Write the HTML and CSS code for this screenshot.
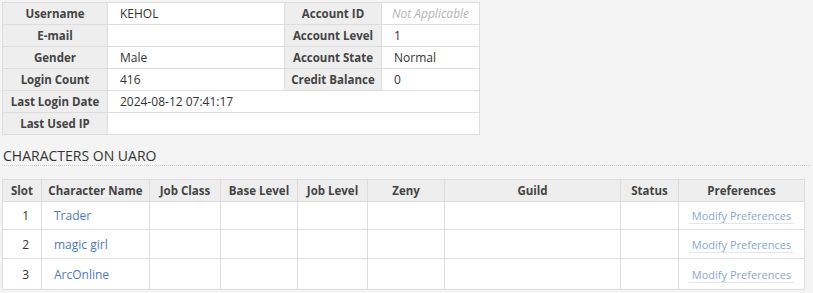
FILE: index.html
```html
<!DOCTYPE html>
<html lang="en">
<head>
    <meta charset="UTF-8">
    <title>Account Details</title>
    <link rel="stylesheet" href="styles.css">
</head>
<body>
    <table class="info">
        <tr>
            <th class="c1">Username</th>
            <td class="c2">KEHOL</td>
            <th class="c3">Account ID</th>
            <td class="c4"><span class="na">Not Applicable</span></td>
        </tr>
        <tr>
            <th>E-mail</th>
            <td></td>
            <th>Account Level</th>
            <td>1</td>
        </tr>
        <tr>
            <th>Gender</th>
            <td>Male</td>
            <th>Account State</th>
            <td>Normal</td>
        </tr>
        <tr>
            <th>Login Count</th>
            <td>416</td>
            <th>Credit Balance</th>
            <td>0</td>
        </tr>
        <tr>
            <th>Last Login Date</th>
            <td colspan="3">2024-08-12 07:41:17</td>
        </tr>
        <tr>
            <th>Last Used IP</th>
            <td colspan="3"></td>
        </tr>
    </table>

    <h3 class="section">Characters on UARO</h3>

    <table class="chars">
        <tr>
            <th class="w-slot">Slot</th>
            <th class="w-name">Character Name</th>
            <th class="w-job">Job Class</th>
            <th class="w-base">Base Level</th>
            <th class="w-jlv">Job Level</th>
            <th class="w-zeny">Zeny</th>
            <th class="w-guild">Guild</th>
            <th class="w-status">Status</th>
            <th>Preferences</th>
        </tr>
        <tr>
            <td class="slot">1</td>
            <td><a href="#" class="name">Trader</a></td>
            <td></td><td></td><td></td><td></td><td></td><td></td>
            <td class="pref"><a href="#">Modify Preferences</a></td>
        </tr>
        <tr class="mid">
            <td class="slot">2</td>
            <td><a href="#" class="name">magic girl</a></td>
            <td></td><td></td><td></td><td></td><td></td><td></td>
            <td class="pref"><a href="#">Modify Preferences</a></td>
        </tr>
        <tr class="last">
            <td class="slot">3</td>
            <td><a href="#" class="name">ArcOnline</a></td>
            <td></td><td></td><td></td><td></td><td></td><td></td>
            <td class="pref"><a href="#">Modify Preferences</a></td>
        </tr>
    </table>
</body>
</html>
```

FILE: styles.css
```css
body {
    font-family: 'Open Sans', 'DejaVu Sans', sans-serif;
    font-size: 12px;
    color: #333333;
    margin: 2px;
    background-color: #f4f4f4;
}

table {
    border-collapse: collapse;
    background-color: #ffffff;
    table-layout: fixed;
}

th, td {
    box-sizing: border-box;
    border: 1px solid #dddddd;
    padding: 0 12px;
    white-space: nowrap;
    overflow: hidden;
}

th {
    background-color: #eeeeee;
    color: #444444;
    font-size: 11.5px;
    font-weight: 700;
    text-align: center;
    padding: 0 2px;
}

td {
    text-align: left;
}

.info {
    width: 478px;
}

.info tr {
    height: 22px;
}

.info .c1 {
    width: 105px;
}

.info .c2 {
    width: 177px;
}

.info .c3 {
    width: 97px;
}

.na {
    color: #b4b4b4;
    font-style: italic;
}

.info .c4 {
    padding-left: 10px;
    padding-right: 0;
}

.section {
    font-size: 14px;
    font-weight: normal;
    text-transform: uppercase;
    color: #333333;
    margin: 11px -2px 13px 0;
    padding: 0 0 0 1px;
    border-bottom: 1px dotted #cccccc;
}

.chars {
    width: 803px;
}

.chars tr {
    height: 28px;
}

.chars tr:first-child {
    height: 22px;
}

.chars tr.mid {
    height: 29px;
}

.chars tr.last {
    height: 31px;
}

.w-slot { width: 39px; }
.w-name { width: 108px; }
.w-job { width: 71px; }
.w-base { width: 77px; }
.w-jlv { width: 70px; }
.w-zeny { width: 77px; }
.w-guild { width: 176px; }
.w-status { width: 58px; }

.slot {
    text-align: right;
    padding-right: 12px;
}

a {
    text-decoration: none;
}

.name {
    color: #4a7ac6;
}

.pref {
    text-align: center;
    padding: 0;
}

.pref a {
    font-size: 11px;
    color: #8aa6d8;
    display: inline-block;
    padding: 0 3px;
    border-bottom: 1px solid #e6e6e6;
}
```
